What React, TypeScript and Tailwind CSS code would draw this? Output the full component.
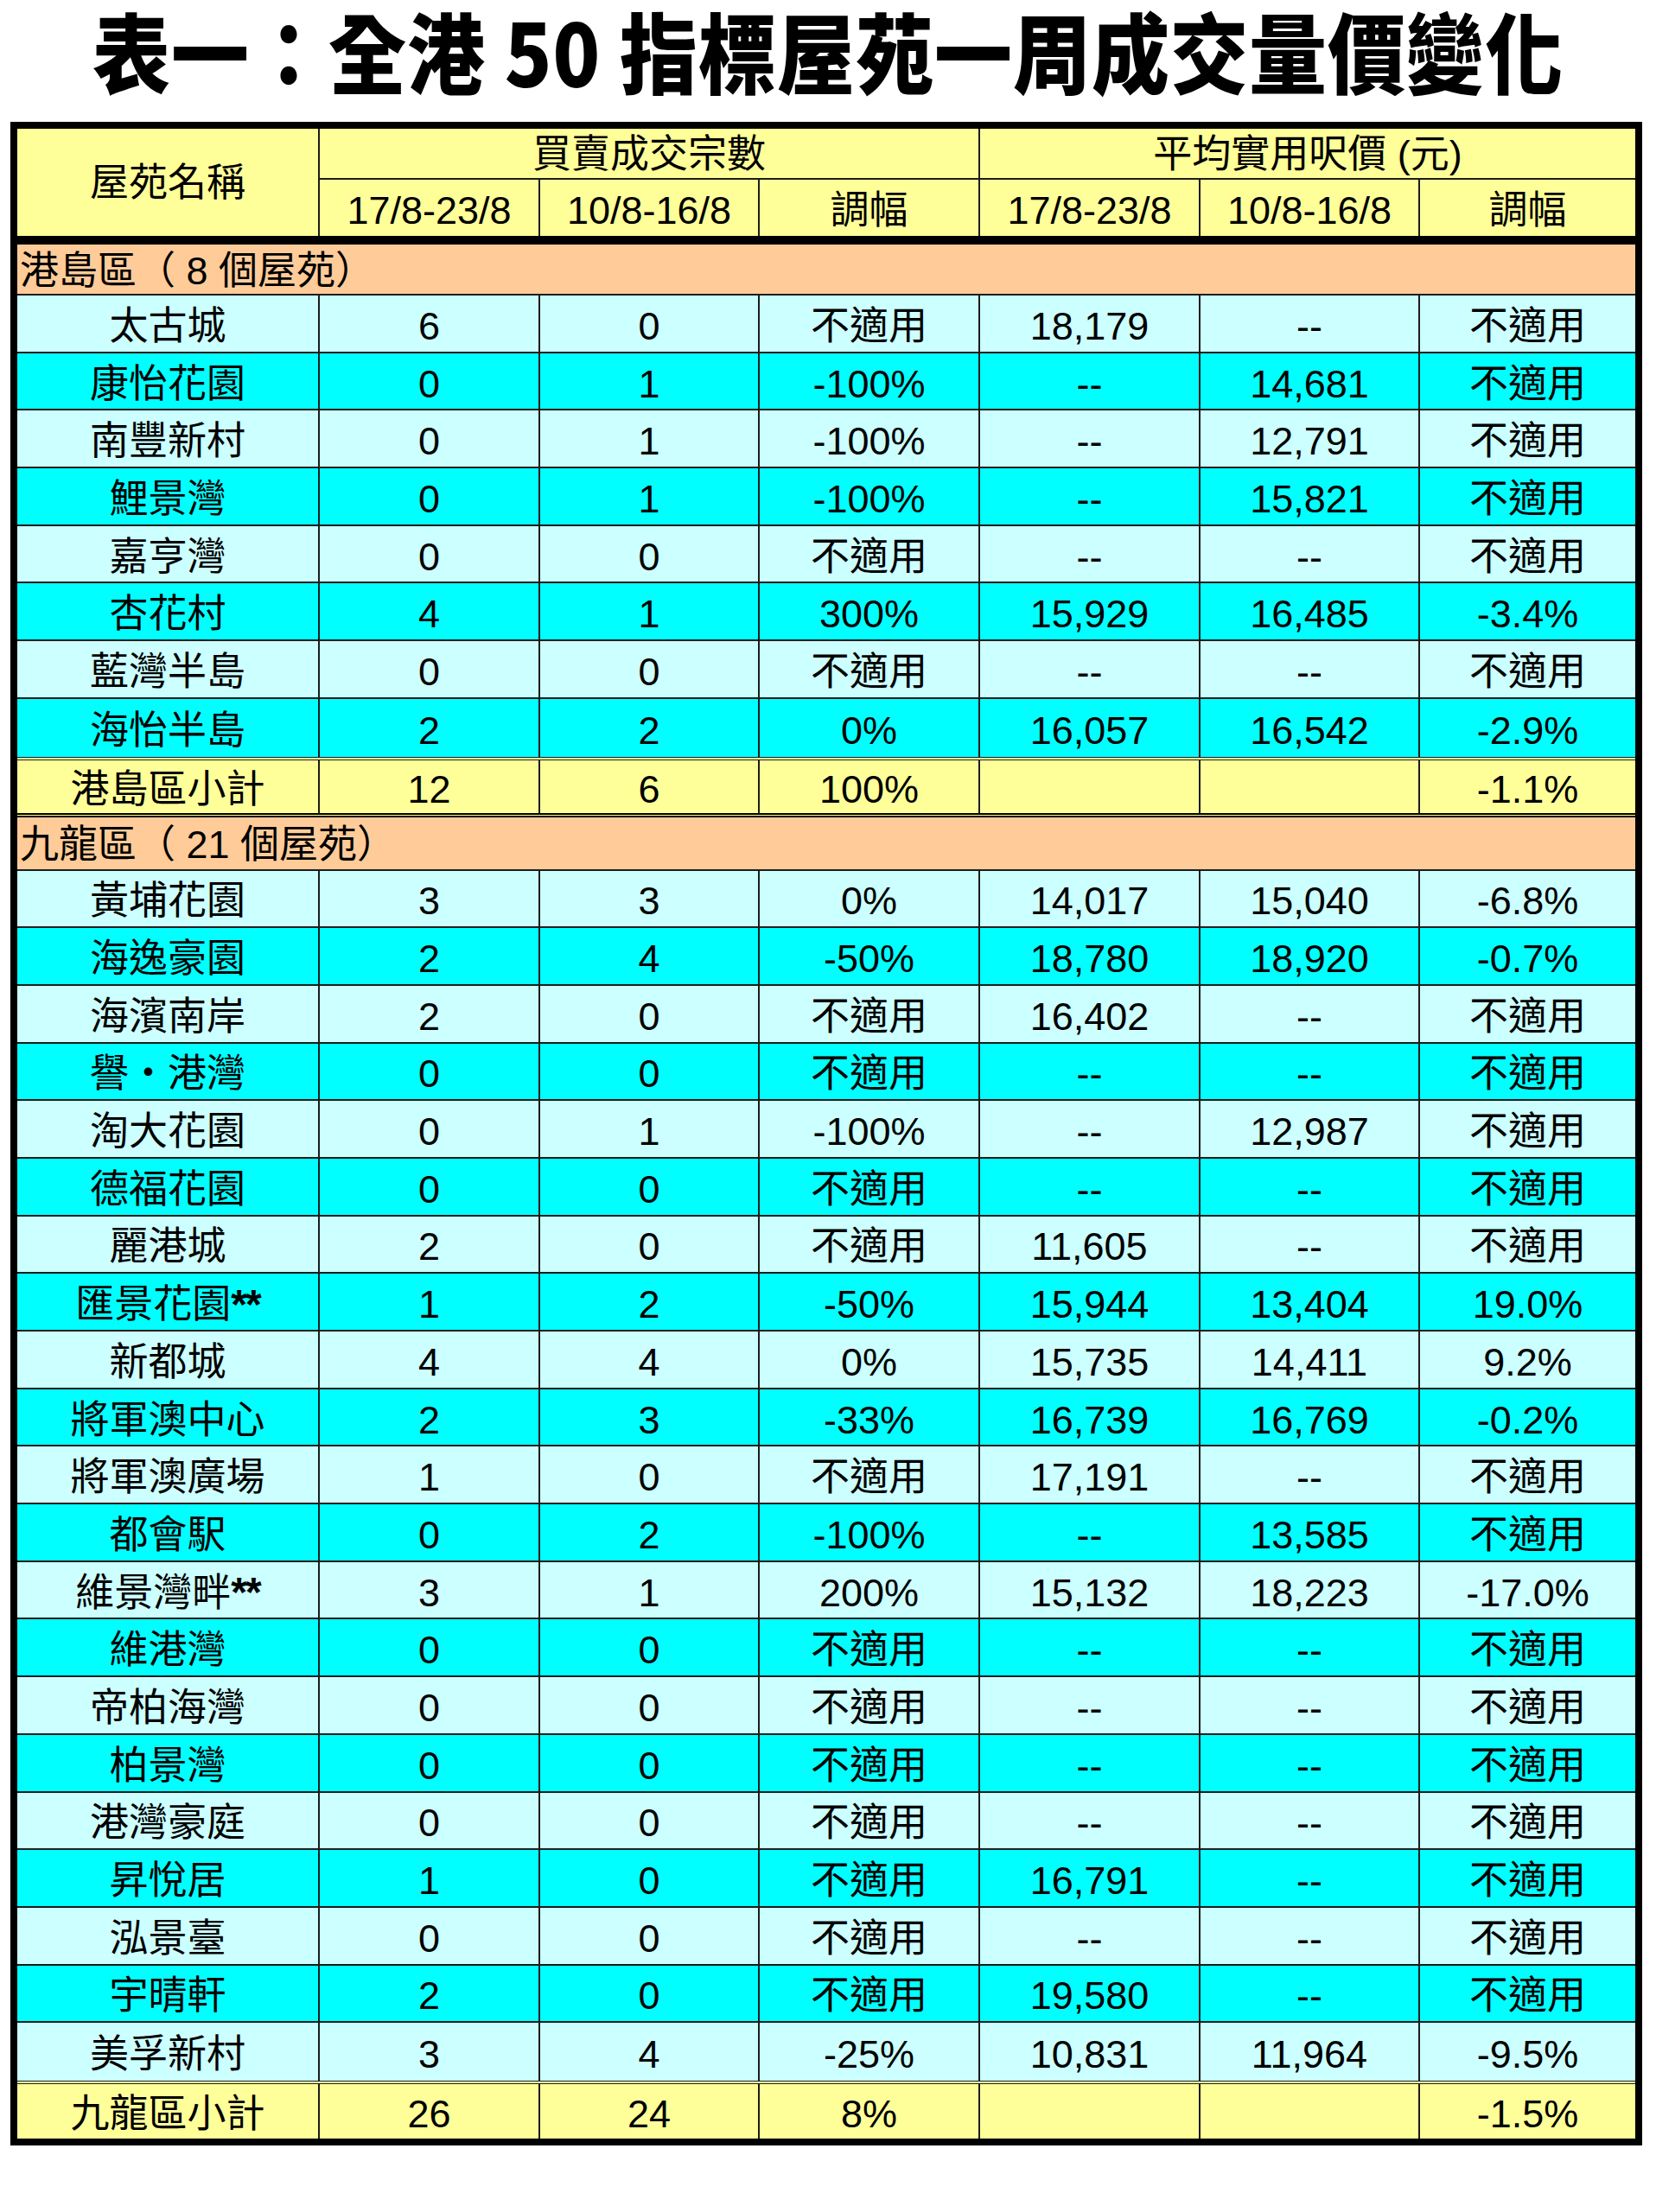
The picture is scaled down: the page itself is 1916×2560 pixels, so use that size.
import React from "react";

type Tone = "light" | "cyan" | "total";
type Row = { cells: string[]; tone: Tone };

const COLS = "grid grid-cols-[350px_255px_254px_255px_255px_254px_249px]";
const LINE = "border-[#1c1c1c]";

const toneBg: Record<Tone, string> = {
  light: "bg-[#ccffff]",
  cyan: "bg-[#00ffff]",
  total: "bg-[#ffff99]",
};

const hkRows: Row[] = [
  { cells: ["太古城", "6", "0", "不適用", "18,179", "--", "不適用"], tone: "light" },
  { cells: ["康怡花園", "0", "1", "-100%", "--", "14,681", "不適用"], tone: "cyan" },
  { cells: ["南豐新村", "0", "1", "-100%", "--", "12,791", "不適用"], tone: "light" },
  { cells: ["鯉景灣", "0", "1", "-100%", "--", "15,821", "不適用"], tone: "cyan" },
  { cells: ["嘉亨灣", "0", "0", "不適用", "--", "--", "不適用"], tone: "light" },
  { cells: ["杏花村", "4", "1", "300%", "15,929", "16,485", "-3.4%"], tone: "cyan" },
  { cells: ["藍灣半島", "0", "0", "不適用", "--", "--", "不適用"], tone: "light" },
  { cells: ["海怡半島", "2", "2", "0%", "16,057", "16,542", "-2.9%"], tone: "cyan" },
];

const klnRows: Row[] = [
  { cells: ["黃埔花園", "3", "3", "0%", "14,017", "15,040", "-6.8%"], tone: "light" },
  { cells: ["海逸豪園", "2", "4", "-50%", "18,780", "18,920", "-0.7%"], tone: "cyan" },
  { cells: ["海濱南岸", "2", "0", "不適用", "16,402", "--", "不適用"], tone: "light" },
  { cells: ["譽・港灣", "0", "0", "不適用", "--", "--", "不適用"], tone: "cyan" },
  { cells: ["淘大花園", "0", "1", "-100%", "--", "12,987", "不適用"], tone: "light" },
  { cells: ["德福花園", "0", "0", "不適用", "--", "--", "不適用"], tone: "cyan" },
  { cells: ["麗港城", "2", "0", "不適用", "11,605", "--", "不適用"], tone: "light" },
  { cells: ["匯景花園**", "1", "2", "-50%", "15,944", "13,404", "19.0%"], tone: "cyan" },
  { cells: ["新都城", "4", "4", "0%", "15,735", "14,411", "9.2%"], tone: "light" },
  { cells: ["將軍澳中心", "2", "3", "-33%", "16,739", "16,769", "-0.2%"], tone: "cyan" },
  { cells: ["將軍澳廣場", "1", "0", "不適用", "17,191", "--", "不適用"], tone: "light" },
  { cells: ["都會駅", "0", "2", "-100%", "--", "13,585", "不適用"], tone: "cyan" },
  { cells: ["維景灣畔**", "3", "1", "200%", "15,132", "18,223", "-17.0%"], tone: "light" },
  { cells: ["維港灣", "0", "0", "不適用", "--", "--", "不適用"], tone: "cyan" },
  { cells: ["帝柏海灣", "0", "0", "不適用", "--", "--", "不適用"], tone: "light" },
  { cells: ["柏景灣", "0", "0", "不適用", "--", "--", "不適用"], tone: "cyan" },
  { cells: ["港灣豪庭", "0", "0", "不適用", "--", "--", "不適用"], tone: "light" },
  { cells: ["昇悅居", "1", "0", "不適用", "16,791", "--", "不適用"], tone: "cyan" },
  { cells: ["泓景臺", "0", "0", "不適用", "--", "--", "不適用"], tone: "light" },
  { cells: ["宇晴軒", "2", "0", "不適用", "19,580", "--", "不適用"], tone: "cyan" },
  { cells: ["美孚新村", "3", "4", "-25%", "10,831", "11,964", "-9.5%"], tone: "light" },
];

// names flagged with ** get the heavier asterisks seen in the sheet
function Label({ text }: { text: string }) {
  if (!text.endsWith("**")) return <>{text}</>;
  return (
    <>
      {text.slice(0, -2)}
      <span className="font-bold text-[48px] tracking-[-2px]">**</span>
    </>
  );
}

function Cells({ cells }: { cells: string[] }) {
  return (
    <>
      {cells.map((c, i) => (
        <div
          key={i}
          className={`flex items-center justify-center pt-[6px] whitespace-nowrap ${i < 6 ? `border-r-2 ${LINE}` : ""}`}
        >
          <Label text={c} />
        </div>
      ))}
    </>
  );
}

function DataRow({ row, last }: { row: Row; last?: boolean }) {
  return (
    <div className={`${COLS} h-[66.7px] ${toneBg[row.tone]} ${last ? "" : `border-b-2 ${LINE}`}`}>
      <Cells cells={row.cells} />
    </div>
  );
}

function Subtotal({ cells, className }: { cells: string[]; className: string }) {
  return (
    <div className={`${COLS} bg-[#ffff99] border-t-[4px] border-double ${LINE} ${className}`}>
      <Cells cells={cells} />
    </div>
  );
}

function Section({ label, className }: { label: string; className: string }) {
  return (
    <div className={`flex items-center bg-[#ffcc99] pl-[3px] pt-[4px] border-b-2 ${LINE} ${className}`}>
      {label}
    </div>
  );
}

function Header() {
  return (
    <div className={`${COLS} grid-rows-[59px_65px] bg-[#ffff99] border-b-[10px] border-black`}>
      <div className={`row-span-2 flex items-center justify-center border-r-2 ${LINE}`}>屋苑名稱</div>
      <div className={`col-span-3 flex items-center justify-center pt-[2px] border-r-2 border-b-2 ${LINE}`}>
        買賣成交宗數
      </div>
      <div className={`col-span-3 flex items-center justify-center pt-[2px] border-b-2 ${LINE}`}>
        平均實用呎價 (元)
      </div>
      {["17/8-23/8", "10/8-16/8", "調幅", "17/8-23/8", "10/8-16/8", "調幅"].map((t, i) => (
        <div
          key={i}
          className={`flex items-center justify-center pt-[5px] ${i < 5 ? `border-r-2 ${LINE}` : ""}`}
        >
          {t}
        </div>
      ))}
    </div>
  );
}

export default function App() {
  return (
    <div className="w-[1916px] min-h-[2560px] bg-white text-black font-['Liberation_Sans','Noto_Sans_CJK_TC',sans-serif]">
      <h1 className="h-[116px] pt-[12px] text-center leading-none font-black font-['Noto_Sans_CJK_TC','Noto_Sans',sans-serif]">
        <span className="inline-block scale-y-[1.12] text-[90px] leading-none tracking-[1px]">
          表一：全港 50 指標屋苑一周成交量價變化
        </span>
      </h1>
      <div className="ml-[12px] mt-[25px] w-[1888px] border-[8px] border-black text-[45px] leading-none">
        <Header />
        <Section label="港島區（ 8 個屋苑）" className="h-[59px]" />
        {hkRows.map((r, i) => (
          <DataRow key={r.cells[0]} row={r} last={i === hkRows.length - 1} />
        ))}
        <Subtotal
          cells={["港島區小計", "12", "6", "100%", "", "", "-1.1%"]}
          className="h-[70px] border-b-[5px] border-b-black border-b-solid"
        />
        <Section label="九龍區（ 21 個屋苑）" className="h-[62px]" />
        {klnRows.map((r, i) => (
          <DataRow key={r.cells[0]} row={r} last={i === klnRows.length - 1} />
        ))}
        <Subtotal cells={["九龍區小計", "26", "24", "8%", "", "", "-1.5%"]} className="h-[67px]" />
      </div>
    </div>
  );
}
